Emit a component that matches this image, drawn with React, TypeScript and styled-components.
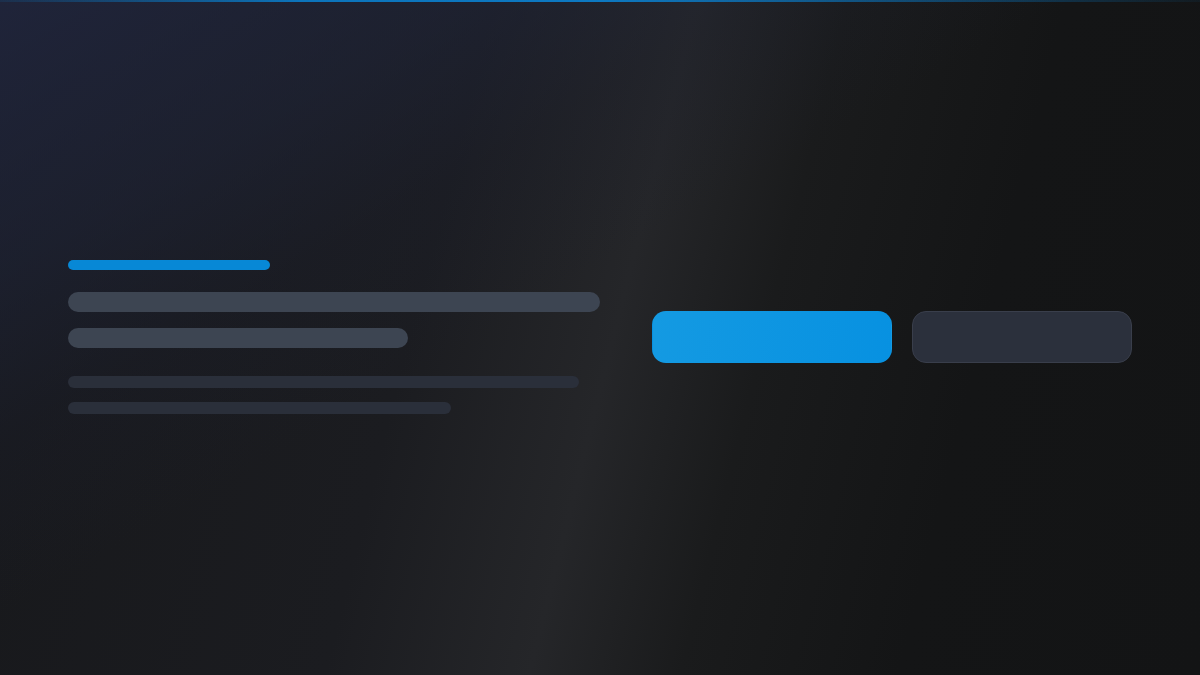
import React from "react";
import styled, { createGlobalStyle } from "styled-components";

const GlobalStyle = createGlobalStyle`
  html, body {
    margin: 0;
    padding: 0;
    background: #141516;
    font-family: Inter, "Noto Sans", sans-serif;
  }
`;

const Page = styled.div`
  display: flex;
  flex-direction: column;
  width: 1200px;
  height: 675px;
  overflow: hidden;
  background:
    linear-gradient(150deg, rgba(34, 40, 68, 0.75) 0%, rgba(32, 38, 62, 0.5) 20%, rgba(28, 32, 50, 0.25) 32%, transparent 45%),
    linear-gradient(
      104deg,
      #17181b 0%,
      #1b1c20 36%,
      #252629 51%,
      #1a1b1c 62%,
      #141516 78%,
      #131415 100%
    );
`;

const AccentLine = styled.div`
  height: 2px;
  flex-shrink: 0;
  background: linear-gradient(
    90deg,
    rgba(11, 110, 180, 0.15) 0%,
    #0c74bb 25%,
    #0d79c2 50%,
    rgba(12, 100, 160, 0.55) 80%,
    rgba(12, 90, 140, 0.1) 100%
  );
`;

const Hero = styled.section`
  flex: 1;
  display: flex;
  align-items: center;
  justify-content: space-between;
  padding: 0 68px 3px;
`;

const Copy = styled.div`
  width: 532px;
  display: flex;
  flex-direction: column;
`;

type Tone = "accent" | "strong" | "muted";

const tones: Record<Tone, string> = {
  accent: "#0788d6",
  strong: "#3d4552",
  muted: "#2a2f3a",
};

const Bar = styled.div<{ $w: number; $h: number; $tone: Tone; $mt?: number }>`
  width: ${(p) => p.$w}px;
  height: ${(p) => p.$h}px;
  margin-top: ${(p) => p.$mt ?? 0}px;
  border-radius: ${(p) => p.$h / 2}px;
  background: ${(p) => tones[p.$tone]};
`;

const Actions = styled.div`
  display: flex;
  gap: 20px;
`;

const Button = styled.div<{ $primary?: boolean }>`
  width: ${(p) => (p.$primary ? 240 : 220)}px;
  height: 52px;
  box-sizing: border-box;
  border-radius: 14px;
  background: ${(p) =>
    p.$primary ? "linear-gradient(100deg, #149ae2 0%, #0791e1 100%)" : "#2b303c"};
  border: 1px solid ${(p) => (p.$primary ? "transparent" : "#393e4b")};
`;

export default function App() {
  return (
    <>
      <GlobalStyle />
      <Page>
        <AccentLine />
        <Hero>
          <Copy>
            <Bar $tone="accent" $w={202} $h={10} />
            <Bar $tone="strong" $w={532} $h={20} $mt={22} />
            <Bar $tone="strong" $w={340} $h={20} $mt={16} />
            <Bar $tone="muted" $w={511} $h={12} $mt={28} />
            <Bar $tone="muted" $w={383} $h={12} $mt={14} />
          </Copy>
          <Actions>
            <Button $primary />
            <Button />
          </Actions>
        </Hero>
      </Page>
    </>
  );
}
